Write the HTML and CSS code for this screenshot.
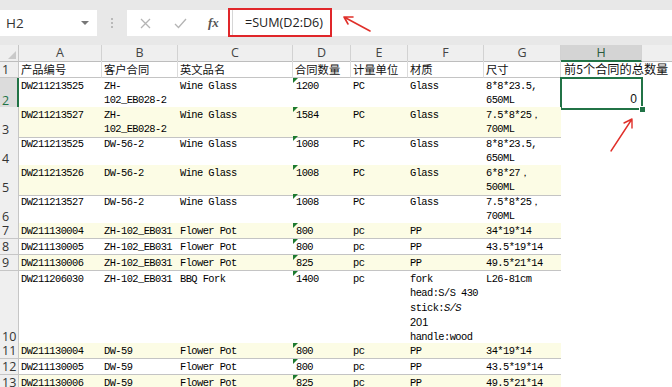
FILE: index.html
```html
<!DOCTYPE html>
<html lang="zh">
<head>
<meta charset="utf-8">
<title>Sheet</title>
<link rel="stylesheet" href="styles.css">
</head>
<body>
<div class="app">
  <div class="topbar">
    <div class="namebox"><span>H2</span><span class="dd"></span></div>
    <div class="grip">
      <svg width="4" height="12" viewBox="0 0 4 12"><circle cx="2" cy="2" r="1" fill="#aaa"/><circle cx="2" cy="6" r="1" fill="#aaa"/><circle cx="2" cy="10" r="1" fill="#aaa"/></svg>
    </div>
    <div class="controls">
      <svg class="ic-x" width="11" height="11" viewBox="0 0 11 11"><path d="M1 1L10 10M10 1L1 10" stroke="#b4b4b4" stroke-width="1.3" fill="none"/></svg>
      <svg class="ic-ok" width="13" height="11" viewBox="0 0 13 11"><path d="M1 6L4.5 9.5L12 1" stroke="#b4b4b4" stroke-width="1.3" fill="none"/></svg>
      <span class="fx">fx</span>
    </div>
    <div class="formula">=SUM(D2:D6)</div>
    <div class="redbox"></div>
    <svg class="arrow1" width="40" height="24" viewBox="0 0 40 24"><path d="M29 17L3 3M3 3L12 3M3 3L7 10" stroke="#e0302a" stroke-width="1.6" fill="none" stroke-linecap="round"/></svg>
  </div>

  <div class="sheet">
    <div class="row hdr">
      <div class="corner"></div>
      <div class="ch">A</div><div class="ch">B</div><div class="ch">C</div><div class="ch">D</div><div class="ch">E</div><div class="ch">F</div><div class="ch">G</div><div class="ch sel">H</div><div class="ch last"></div>
    </div>
    <div class="row h17">
      <div class="rn">1</div>
      <div class="c t">产品编号</div><div class="c t">客户合同</div><div class="c t">英文品名</div><div class="c t">合同数量</div><div class="c t">计量单位</div><div class="c t">材质</div><div class="c t">尺寸</div><div class="c t h1">前5个合同的总数量</div><div class="e"></div>
    </div>
    <div class="row h29">
      <div class="rn on">2</div>
      <div class="c">DW211213525</div><div class="c">ZH-<br>102_EB028-2</div><div class="c">Wine Glass</div><div class="c n">1200</div><div class="c">PC</div><div class="c">Glass</div><div class="c">8*8*23.5,<br>650ML</div><div class="e active"><span class="zero">0</span></div><div class="e"></div>
    </div>
    <div class="row h29 y">
      <div class="rn">3</div>
      <div class="c">DW211213527</div><div class="c">ZH-<br>102_EB028-2</div><div class="c">Wine Glass</div><div class="c n">1584</div><div class="c">PC</div><div class="c">Glass</div><div class="c">7.5*8*25，<br>700ML</div><div class="e"></div><div class="e"></div>
    </div>
    <div class="row h29">
      <div class="rn">4</div>
      <div class="c">DW211213525</div><div class="c">DW-56-2</div><div class="c">Wine Glass</div><div class="c n">1008</div><div class="c">PC</div><div class="c">Glass</div><div class="c">8*8*23.5,<br>650ML</div><div class="e"></div><div class="e"></div>
    </div>
    <div class="row h29 y">
      <div class="rn">5</div>
      <div class="c">DW211213526</div><div class="c">DW-56-2</div><div class="c">Wine Glass</div><div class="c n">1008</div><div class="c">PC</div><div class="c">Glass</div><div class="c">6*8*27，<br>500ML</div><div class="e"></div><div class="e"></div>
    </div>
    <div class="row h29">
      <div class="rn">6</div>
      <div class="c">DW211213527</div><div class="c">DW-56-2</div><div class="c">Wine Glass</div><div class="c n">1008</div><div class="c">PC</div><div class="c">Glass</div><div class="c">7.5*8*25，<br>700ML</div><div class="e"></div><div class="e"></div>
    </div>
    <div class="row h16 y">
      <div class="rn">7</div>
      <div class="c">DW211130004</div><div class="c">ZH-102_EB031</div><div class="c">Flower Pot</div><div class="c n">800</div><div class="c">pc</div><div class="c">PP</div><div class="c">34*19*14</div><div class="e"></div><div class="e"></div>
    </div>
    <div class="row h16">
      <div class="rn">8</div>
      <div class="c">DW211130005</div><div class="c">ZH-102_EB031</div><div class="c">Flower Pot</div><div class="c n">800</div><div class="c">pc</div><div class="c">PP</div><div class="c">43.5*19*14</div><div class="e"></div><div class="e"></div>
    </div>
    <div class="row h16 y">
      <div class="rn">9</div>
      <div class="c">DW211130006</div><div class="c">ZH-102_EB031</div><div class="c">Flower Pot</div><div class="c n">825</div><div class="c">pc</div><div class="c">PP</div><div class="c">49.5*21*14</div><div class="e"></div><div class="e"></div>
    </div>
    <div class="row h72">
      <div class="rn">10</div>
      <div class="c">DW211206030</div><div class="c">ZH-102_EB031</div><div class="c">BBQ Fork</div><div class="c n">1400</div><div class="c">pc</div><div class="c">fork<br>head:S/S 430<br>stick:<i>S/S</i><br><span class="sans">201</span><br>handle:wood</div><div class="c">L26-81cm</div><div class="e"></div><div class="e"></div>
    </div>
    <div class="row h16 y">
      <div class="rn">11</div>
      <div class="c">DW211130004</div><div class="c">DW-59</div><div class="c">Flower Pot</div><div class="c n">800</div><div class="c">pc</div><div class="c">PP</div><div class="c">34*19*14</div><div class="e"></div><div class="e"></div>
    </div>
    <div class="row h16">
      <div class="rn">12</div>
      <div class="c">DW211130005</div><div class="c">DW-59</div><div class="c">Flower Pot</div><div class="c n">800</div><div class="c">pc</div><div class="c">PP</div><div class="c">43.5*19*14</div><div class="e"></div><div class="e"></div>
    </div>
    <div class="row h16 y">
      <div class="rn">13</div>
      <div class="c">DW211130006</div><div class="c">DW-59</div><div class="c">Flower Pot</div><div class="c n">825</div><div class="c">pc</div><div class="c">PP</div><div class="c">49.5*21*14</div><div class="e"></div><div class="e"></div>
    </div>
    <svg class="arrow2" width="30" height="40" viewBox="0 0 30 40"><path d="M3 36L24 4M24 4L16 8M24 4L24 13" stroke="#e0302a" stroke-width="1.4" fill="none" stroke-linecap="round"/></svg>
  </div>
</div>
</body>
</html>
```

FILE: styles.css
```css
html, body {
  margin: 0;
  padding: 0;
  width: 672px;
  height: 387px;
  overflow: hidden;
  background: #ffffff;
}
.app {
  position: relative;
  font-family: "Liberation Sans", "Noto Sans CJK SC", sans-serif;
}
.topbar {
  position: relative;
  height: 45px;
  box-sizing: border-box;
  padding-top: 10px;
  background: #e8e8e8;
  display: flex;
  align-items: flex-start;
}
.namebox {
  width: 97px;
  height: 26px;
  box-sizing: border-box;
  background: #ffffff;
  display: flex;
  align-items: center;
  justify-content: space-between;
  padding: 0 8px 0 6px;
  font-family: "Open Sans", "Noto Sans", sans-serif;
  font-size: 13.5px;
  color: #333;
}
.dd {
  width: 0;
  height: 0;
  border-left: 4px solid transparent;
  border-right: 4px solid transparent;
  border-top: 4px solid #777;
}
.grip {
  width: 30px;
  height: 26px;
  display: flex;
  align-items: center;
  justify-content: center;
}
.controls {
  width: 106px;
  height: 26px;
  box-sizing: border-box;
  background: #ffffff;
  border-right: 1px solid #d6d6d6;
  display: flex;
  align-items: center;
  padding-left: 13px;
}
.ic-x { margin-right: 23px; }
.ic-ok { margin-right: 21px; }
.fx {
  font-family: "Liberation Serif", serif;
  font-style: italic;
  font-weight: bold;
  font-size: 13px;
  color: #555;
}
.formula {
  flex: 1;
  height: 26px;
  background: #ffffff;
  padding-left: 12px;
  font-family: "Open Sans", "Noto Sans", sans-serif;
  font-size: 12.6px;
  line-height: 26px;
  color: #222;
}
.redbox {
  position: absolute;
  left: 228px;
  top: 8px;
  width: 104px;
  height: 29px;
  box-sizing: border-box;
  border: 2px solid #e0262a;
}
.arrow1 {
  position: absolute;
  left: 341px;
  top: 14px;
}
.sheet {
  position: relative;
}
.arrow2 {
  position: absolute;
  left: 608px;
  top: 70px;
}
.row {
  display: grid;
  grid-template-columns: 19px 83px 76px 115px 58px 57px 76px 77px 81px 1fr;
}
.hdr { height: 16px; }
.h16 { height: 16px; }
.h17 { height: 17px; }
.h29 { height: 29px; }
.h72 { height: 72px; }

.corner {
  position: relative;
  background: #efefef;
  border-right: 1px solid #c6c6c6;
  border-bottom: 1px solid #bdbdbd;
  box-sizing: border-box;
}
.corner::after {
  content: "";
  position: absolute;
  right: 2px;
  bottom: 2px;
  border-left: 8px solid transparent;
  border-bottom: 8px solid #c9c9c9;
}
.ch {
  background: #efefef;
  border-right: 1px solid #d2d2d2;
  border-bottom: 1px solid #bdbdbd;
  box-sizing: border-box;
  text-align: center;
  font-family: "Open Sans", "Noto Sans", sans-serif;
  font-size: 12.5px;
  line-height: 15px;
  color: #444;
}
.ch.sel {
  background: #d4d4d4;
  border-bottom: 2px solid #217346;
  color: #2a5a3c;
}
.ch.last { border-right: none; }

.rn {
  background: #efefef;
  border-right: 1px solid #c6c6c6;
  border-bottom: 1px solid #c6c6c6;
  box-sizing: border-box;
  display: flex;
  align-items: flex-end;
  padding: 0 0 1px 2px;
  font-family: "Open Sans", "Noto Sans", sans-serif;
  font-size: 12.5px;
  line-height: 13px;
  color: #333;
}
.rn.on {
  background: #dcdcdc;
  color: #217346;
  border-right: 2px solid #217346;
}
.c {
  position: relative;
  box-sizing: border-box;
  border-bottom: 1px solid #c4c4c4;
  padding: 1px 0 0 2px;
  font-family: "Liberation Mono", monospace;
  font-size: 10.4px;
  letter-spacing: -0.57px;
  line-height: 14.3px;
  color: #000;
  white-space: nowrap;
  overflow: visible;
}
.row.y .c { background: #fcfce5; }
.c.t {
  font-family: "Noto Sans CJK SC", sans-serif;
  font-size: 11.3px;
  letter-spacing: 0;
  line-height: 16px;
  padding-top: 0;
  border-right: 1px solid #dcdcdc;
  color: #111;
}
.c.t.h1 {
  border-right: none;
  border-bottom: none;
  font-size: 12.2px;
  padding-left: 3px;
  z-index: 1;
}
.c.n { padding-left: 3px; }
.c.n::before {
  content: "";
  position: absolute;
  left: 0;
  top: 0;
  border-top: 5px solid #1d7a2f;
  border-right: 5px solid transparent;
}
.sans {
  font-family: "Liberation Sans", sans-serif;
  font-size: 11px;
  letter-spacing: 0;
}
.e {
  position: relative;
}
.active {
  display: flex;
  align-items: flex-end;
  justify-content: flex-end;
  padding: 0 5px 3px 0;
}
.active::before {
  content: "";
  position: absolute;
  left: -1px;
  top: -1px;
  right: -1px;
  bottom: -1px;
  border: 2px solid #217346;
}
.active::after {
  content: "";
  position: absolute;
  right: -4px;
  bottom: -4px;
  width: 5px;
  height: 5px;
  background: #217346;
  border: 1px solid #ffffff;
}
.zero {
  font-family: "Liberation Sans", sans-serif;
  font-size: 12px;
  line-height: 14px;
  color: #111;
}
```
